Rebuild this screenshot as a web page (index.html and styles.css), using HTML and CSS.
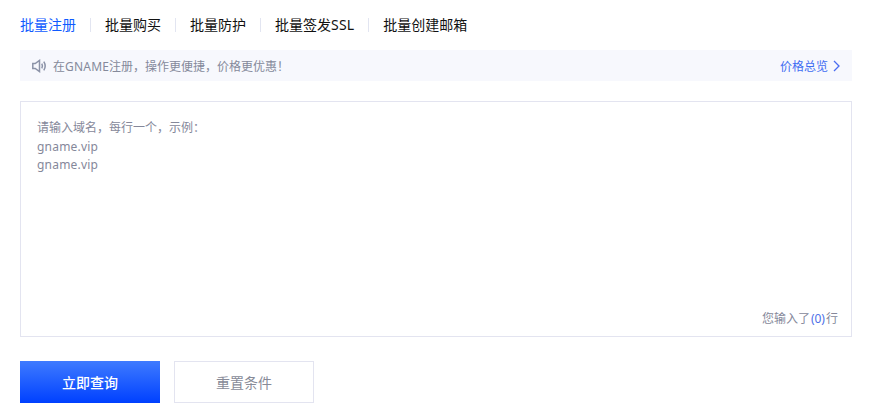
FILE: index.html
```html
<!DOCTYPE html>
<html lang="zh-CN">
<head>
    <meta charset="UTF-8">
    <title>批量注册</title>
    <link rel="stylesheet" href="styles.css">
</head>
<body>
    <div class="tabs">
        <a class="tab active">批量注册</a>
        <i class="tab-sep"></i>
        <a class="tab">批量购买</a>
        <i class="tab-sep"></i>
        <a class="tab">批量防护</a>
        <i class="tab-sep"></i>
        <a class="tab">批量签发<span class="latin">SSL</span></a>
        <i class="tab-sep"></i>
        <a class="tab">批量创建邮箱</a>
    </div>

    <div class="notice">
        <div class="notice-text">
            <svg class="horn" width="15" height="14" viewBox="0 0 15 14" fill="none" stroke="#8c93a8" stroke-width="1.5">
                <path d="M.8 4.5h2.4L7.5 1.4v11.2L3.2 9.5H.8z"/>
                <path d="M9.8 4.6c.8 1.5.8 3.3 0 4.8"/>
                <path d="M11.8 2.6c1.7 2.7 1.7 6.1 0 8.8"/>
            </svg>
            <span>在<span class="latin">GNAME</span>注册，操作更便捷，价格更优惠！</span>
        </div>
        <a class="notice-link">价格总览
            <svg width="7" height="12" viewBox="0 0 7 12" fill="none" stroke="#4a6cf0" stroke-width="1.3"><path d="M1 1l5 5-5 5"/></svg>
        </a>
    </div>

    <div class="domain-box">
        <div class="placeholder">请输入域名，每行一个，示例：<br><span class="latin">gname.vip</span><br><span class="latin">gname.vip</span></div>
        <div class="counter">您输入了<span class="count">(0)</span>行</div>
    </div>

    <div class="actions">
        <button class="btn btn-primary">立即查询</button>
        <button class="btn btn-reset">重置条件</button>
    </div>
</body>
</html>
```
FILE: styles.css
```css
html, body {
    margin: 0;
    padding: 0;
}

body {
    width: 877px;
    height: 420px;
    overflow: hidden;
    background: #fff;
    font-family: "Noto Sans", "Noto Sans CJK SC", sans-serif;
    font-size: 12px;
    box-sizing: border-box;
    padding: 16px 25px 0 20px;
}

.latin {
    letter-spacing: 0.2px;
}

.tabs {
    display: flex;
    align-items: center;
    height: 18px;
}

.tab {
    font-size: 14px;
    line-height: 18px;
    color: #111;
}

.tab.active {
    color: #0f5bff;
}

.tab-sep {
    width: 1px;
    height: 14px;
    margin: 0 14px;
    background: #e2e5f1;
}

.notice {
    display: flex;
    justify-content: space-between;
    align-items: center;
    height: 31px;
    margin-top: 16px;
    padding: 0 12px;
    background: #f7f8fd;
    color: #858a9b;
}

.notice-text {
    display: flex;
    align-items: center;
    gap: 6px;
}

.notice-link {
    display: flex;
    align-items: center;
    gap: 5px;
    color: #3f6df2;
}

.domain-box {
    display: flex;
    flex-direction: column;
    justify-content: space-between;
    height: 236px;
    margin-top: 20px;
    padding: 17px 13px 8px 16px;
    box-sizing: border-box;
    border: 1px solid #e3e4f0;
}

.placeholder {
    line-height: 18.5px;
    color: #85889a;
}

.counter {
    text-align: right;
    color: #85889a;
    line-height: 18px;
}

.count {
    padding: 0 1px;
    color: #4d70e8;
}

.actions {
    display: flex;
    gap: 14px;
    margin-top: 24px;
}

.btn {
    width: 140px;
    height: 42px;
    font-family: inherit;
    font-size: 14px;
    padding: 0;
}

.btn-primary {
    border: none;
    color: #fff;
    font-weight: 500;
    background: linear-gradient(#3f7bff, #0040ff);
}

.btn-reset {
    background: #fff;
    color: #888b98;
    border: 1px solid #e3e4f0;
}
```
